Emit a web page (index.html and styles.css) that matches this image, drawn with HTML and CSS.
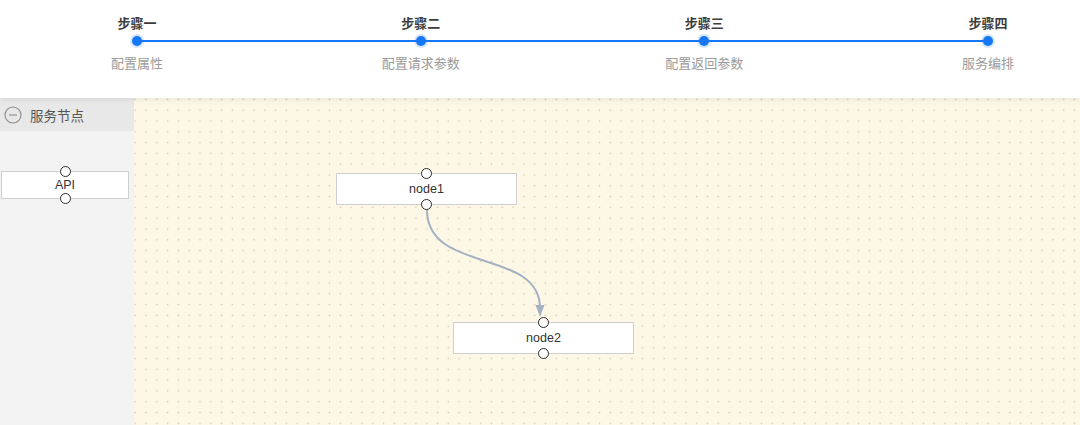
FILE: index.html
```html
<!DOCTYPE html>
<html lang="zh">
<head>
<meta charset="utf-8">
<link rel="stylesheet" href="styles.css">
</head>
<body>
<header class="steps-bar">
  <div class="steps">
    <div class="step"><div class="step-title">步骤一</div><div class="step-dot"></div><div class="step-desc">配置属性</div></div>
    <div class="step"><div class="step-title">步骤二</div><div class="step-dot"></div><div class="step-desc">配置请求参数</div></div>
    <div class="step"><div class="step-title">步骤三</div><div class="step-dot"></div><div class="step-desc">配置返回参数</div></div>
    <div class="step"><div class="step-title">步骤四</div><div class="step-dot"></div><div class="step-desc">服务编排</div></div>
  </div>
</header>
<main class="workspace">
  <aside class="sidebar">
    <div class="group-head">
      <svg class="collapse-icon" width="18" height="18" viewBox="0 0 18 18"><circle cx="9" cy="9" r="8" fill="none" stroke="#8a8a8a" stroke-width="1.1"/><line x1="5" y1="9" x2="13" y2="9" stroke="#8a8a8a" stroke-width="1.1"/></svg>
      <span>服务节点</span>
    </div>
    <div class="palette">
      <div class="node palette-node"><span class="port port-top"></span>API<span class="port port-bottom"></span></div>
    </div>
  </aside>
  <section class="canvas">
    <svg class="edges" width="946" height="327" viewBox="0 0 946 327">
      <path d="M293,112 C293,176 406,150 406,210" fill="none" stroke="#a3b1c2" stroke-width="2"/>
      <polygon points="401.5,207 410.5,207 406,219" fill="#a3b1c2"/>
    </svg>
    <div class="node canvas-node n1"><span class="port port-top"></span>node1<span class="port port-bottom"></span></div>
    <div class="node canvas-node n2"><span class="port port-top"></span>node2<span class="port port-bottom"></span></div>
  </section>
</main>
</body>
</html>
```
FILE: styles.css
```css
html, body {
  margin: 0;
  padding: 0;
  width: 1080px;
  height: 425px;
  overflow: hidden;
  background: #ffffff;
  font-family: "Liberation Sans", "Noto Sans CJK SC", sans-serif;
}

.steps-bar {
  position: relative;
  z-index: 2;
  height: 98px;
  background: #ffffff;
  box-shadow: 0 2px 6px rgba(0, 0, 0, 0.07);
  box-sizing: border-box;
  padding-top: 14px;
}

.steps {
  position: relative;
  display: flex;
  justify-content: space-between;
  margin: 0 42px 0 87px;
}

.steps::before {
  content: "";
  position: absolute;
  left: 50px;
  right: 50px;
  top: 26px;
  height: 2px;
  background: #1677f6;
}

.step {
  width: 100px;
  display: flex;
  flex-direction: column;
  align-items: center;
  position: relative;
}

.step-title {
  font-family: "Noto Sans CJK SC", sans-serif;
  font-size: 13px;
  line-height: 18px;
  font-weight: 700;
  color: #3c3c3c;
}

.step-dot {
  margin-top: 4px;
  width: 10px;
  height: 10px;
  border-radius: 50%;
  background: #1677f6;
  box-shadow: 0 0 0 2px rgba(22, 119, 246, 0.18);
}

.step-desc {
  margin-top: 8px;
  font-family: "Noto Sans CJK SC", sans-serif;
  font-size: 13px;
  line-height: 18px;
  color: #9a9a9a;
}

.workspace {
  display: flex;
  height: 327px;
}

.sidebar {
  width: 134px;
  flex: none;
  background: #f3f3f3;
}

.group-head {
  height: 33px;
  background: #e8e8e8;
  display: flex;
  align-items: center;
  gap: 8px;
  padding-left: 4px;
  font-family: "Noto Sans CJK SC", sans-serif;
  font-size: 13.5px;
  color: #555555;
}

.collapse-icon {
  flex: none;
}

.palette {
  padding-top: 40px;
  padding-left: 1px;
}

.node {
  position: relative;
  box-sizing: border-box;
  background: #ffffff;
  border: 1px solid #cfcfcf;
  display: flex;
  align-items: center;
  justify-content: center;
  font-size: 12.5px;
  color: #333333;
}

.palette-node {
  width: 128px;
  height: 28px;
}

.canvas {
  position: relative;
  flex: 1;
  background-color: #fdf8e6;
  background-image: radial-gradient(circle, #d3ccb6 0.7px, transparent 1.1px);
  background-size: 10.8px 10.8px;
  background-position: -4.2px -4px;
}

.edges {
  position: absolute;
  left: 0;
  top: 0;
}

.canvas-node {
  position: absolute;
  width: 181px;
  height: 32px;
  font-size: 12.5px;
}

.n1 {
  left: 202px;
  top: 75px;
}

.n2 {
  left: 319px;
  top: 224px;
}

.port {
  position: absolute;
  left: 50%;
  width: 11px;
  height: 11px;
  box-sizing: border-box;
  margin-left: -5.5px;
  border: 1.4px solid #2b2b2b;
  border-radius: 50%;
  background: #ffffff;
}

.port-top {
  top: -6px;
}

.port-bottom {
  bottom: -6px;
}
```
